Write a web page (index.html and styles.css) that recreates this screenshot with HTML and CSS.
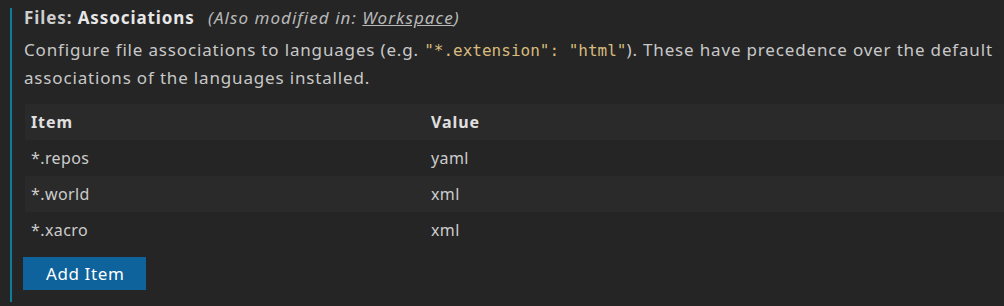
FILE: index.html
```html
<!DOCTYPE html>
<html lang="en">
<head>
    <meta charset="UTF-8">
    <title>Settings - Files: Associations</title>
    <link rel="stylesheet" href="styles.css">
</head>
<body>
    <div class="setting-item modified">
        <div class="setting-title">
            <span class="category">Files: </span><span class="label">Associations</span>
            <span class="also-modified">(Also modified in: <a href="#">Workspace</a>)</span>
        </div>
        <div class="setting-description">
            Configure file associations to languages (e.g. <code>"*.extension": "html"</code>). These have precedence over the default associations of the languages installed.
        </div>

        <div class="list">
            <div class="list-row list-header">
                <div class="col-key">Item</div>
                <div class="col-value">Value</div>
            </div>
            <div class="list-row">
                <div class="col-key">*.repos</div>
                <div class="col-value">yaml</div>
            </div>
            <div class="list-row">
                <div class="col-key">*.world</div>
                <div class="col-value">xml</div>
            </div>
            <div class="list-row">
                <div class="col-key">*.xacro</div>
                <div class="col-value">xml</div>
            </div>
        </div>

        <button class="add-item">Add Item</button>
    </div>
</body>
</html>
```

FILE: styles.css
```css
body {
    margin: 0;
    background-color: #252525;
    font-family: "Noto Sans", sans-serif;
    font-size: 17px;
    letter-spacing: 0.6px;
    color: #cccccc;
}
.setting-item {
    margin-left: 10px;
    margin-top: 8px;
    padding: 0 0 12px 12px;
    border-left: 2px solid #0c7d9d;
}
.setting-title {
    font-weight: bold;
    line-height: 18px;
    padding-top: 1px;
    letter-spacing: 0.9px;
}
.category {
    color: #cfcfcf;
}
.label {
    color: #e7e7e7;
}
.also-modified {
    font-weight: normal;
    font-style: italic;
    color: #b8b8b8;
    margin-left: 8px;
    letter-spacing: 1.05px;
}
.also-modified a {
    color: inherit;
}
.setting-description {
    margin-top: 9px;
    line-height: 27px;
    color: #c8c8c8;
    letter-spacing: 0.83px;
}
code {
    font-family: "DejaVu Sans Mono", monospace;
    font-size: 16px;
    letter-spacing: 0;
    color: #d7ba7d;
}
.list {
    margin: 13px 0 0 1px;
    font-size: 16px;
    letter-spacing: 0.4px;
}
.list-row {
    display: flex;
    height: 36px;
    align-items: center;
}
.list-row:nth-child(odd) {
    background-color: #2a2a2a;
}
.list-header {
    font-weight: bold;
    color: #e0e0e0;
    letter-spacing: 0.9px;
}
.col-key {
    width: 394px;
    padding-left: 6px;
}
.col-value {
    flex: 1;
    padding-left: 6px;
}
.add-item {
    display: block;
    margin-top: 9px;
    margin-left: -1px;
    height: 33px;
    padding: 0 22px 0 23px;
    border: none;
    background-color: #0e639c;
    color: #ffffff;
    font-family: inherit;
    font-size: 17px;
    letter-spacing: 0.6px;
}
```
